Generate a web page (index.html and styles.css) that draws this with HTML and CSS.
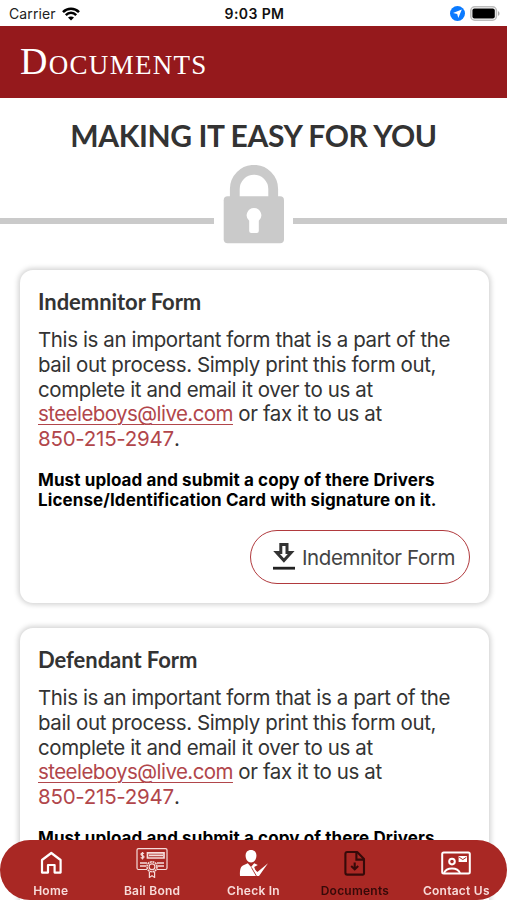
FILE: index.html
```
<!DOCTYPE html>
<html lang="en">
<head>
    <meta charset="UTF-8">
    <meta name="viewport" content="width=device-width, initial-scale=1.0">
    <title>Documents</title>
    <link rel="stylesheet" href="styles.css">
</head>
<body>
    <div class="status-bar">
        <div class="carrier">
            <span>Carrier</span>
            <svg width="18" height="14" viewBox="0 0 18 14" fill="none" stroke="#000" stroke-width="2.5">
                <path d="M1 5.2C5.4 0.7 12.6 0.7 17 5.2"/>
                <path d="M3.8 8.1C6.8 5.1 11.2 5.1 14.2 8.1"/>
                <path d="M9 13.6L6 10.6C7.6 9 10.4 9 12 10.6Z" fill="#000" stroke="none"/>
            </svg>
        </div>
        <div class="time">9:03 PM</div>
        <div class="indicators">
            <svg width="15" height="15" viewBox="0 0 15 15">
                <circle cx="7.5" cy="7.5" r="7.5" fill="#0a7aff"/>
                <path d="M11.8 3.4L8.3 12L7.2 8L3 7.1Z" fill="#fff"/>
            </svg>
            <svg width="30" height="15" viewBox="0 0 30 15">
                <rect x="0.8" y="0.8" width="25.6" height="13.4" rx="4" fill="#fff" stroke="#bdbdbd" stroke-width="1.6"/>
                <rect x="2.4" y="2.6" width="22.4" height="9.8" rx="2" fill="#000"/>
                <path d="M28 5.2C30 5.8 30 9.2 28 9.8Z" fill="#aaa"/>
            </svg>
        </div>
    </div>

    <header class="header">
        <h1>Documents</h1>
    </header>

    <main class="content">
        <h2 class="tagline">MAKING IT EASY FOR YOU</h2>
        <div class="divider">
            <span class="line"></span>
            <svg class="lock" width="61" height="79" viewBox="0 0 61 79">
                <path d="M11.8 36V24a19.2 19.2 0 0 1 38.4 0V36" fill="none" stroke="#cacaca" stroke-width="9.8"/>
                <rect x="0.7" y="31.2" width="60.3" height="47" rx="4" fill="#cacaca"/>
                <path d="M31 43a7.3 7.3 0 0 1 4.8 12.8V66q0 2-2 2h-5.6q-2 0-2-2V55.8a7.3 7.3 0 0 1 4.8-12.8Z" fill="#fff"/>
            </svg>
            <span class="line"></span>
        </div>

        <section class="card">
            <h3>Indemnitor Form</h3>
            <p class="description">
                This is an important form that is a part of the<br>
                bail out process. Simply print this form out,<br>
                complete it and email it over to us at<br>
                <a class="email" href="#">steeleboys@live.com</a> or fax it to us at<br>
                <a class="phone" href="#">850-215-2947</a>.
            </p>
            <p class="note">
                Must upload and submit a copy of there Drivers<br>
                License/Identification Card with signature on it.
            </p>
            <a class="download" href="#">
                <svg width="22" height="27" viewBox="0 0 22 27">
                    <path d="M7.8 1.5H14V9.5H18.2L10.9 17.6L3.6 9.5H7.8Z" fill="none" stroke="#333" stroke-width="3"/>
                    <rect x="0" y="23.8" width="22" height="2.8" fill="#222"/>
                </svg>
                <span>Indemnitor Form</span>
            </a>
        </section>

        <section class="card">
            <h3>Defendant Form</h3>
            <p class="description">
                This is an important form that is a part of the<br>
                bail out process. Simply print this form out,<br>
                complete it and email it over to us at<br>
                <a class="email" href="#">steeleboys@live.com</a> or fax it to us at<br>
                <a class="phone" href="#">850-215-2947</a>.
            </p>
            <p class="note">
                Must upload and submit a copy of there Drivers
            </p>
        </section>
    </main>

    <nav class="tabs">
        <a class="tab" href="#">
            <svg width="30" height="30" viewBox="0 0 30 30" fill="none" stroke="#fff" stroke-width="2.2">
                <path d="M6 12L15.3 5L24.6 12V24.6H18.6V17H12V24.6H6Z" stroke-linejoin="round"/>
            </svg>
            <span>Home</span>
        </a>
        <a class="tab" href="#">
            <svg width="32" height="30" viewBox="0 0 32 30" fill="none" stroke="#f6dcda" stroke-width="1.2">
                <path d="M11 21.5H2.5Q1 21.5 1 20V2Q1 .6 2.5 .6H29.5Q31 .6 31 2V20Q31 21.5 29.5 21.5H21"/>
                <path d="M8 5.6C7 4.6 4.8 5 5 6.4C5.2 8 8.2 7.2 8 9C7.8 10.4 5.6 10.6 4.8 9.4M6.5 4V11.4"/>
                <path d="M11.5 4.8H28V10H11.5ZM13 7.4H27M4 15H11M21 15H28M4 18H10M22 18H28" stroke-width="1.7"/>
                <circle cx="16" cy="18.8" r="5" stroke-dasharray="2 .6" stroke-width="1.6"/>
                <circle cx="16" cy="18.8" r="2.9" fill="#a92824"/>
                <path d="M13.4 23.4V29.4L16 27.8L18.6 29.4V23.4"/>
            </svg>
            <span>Bail Bond</span>
        </a>
        <a class="tab" href="#">
            <svg width="30" height="30" viewBox="0 0 30 30">
                <path d="M12 2C15.6 2 17.4 4.4 17.4 7.6C17.4 11.4 15.2 14.6 12 14.6S6.6 11.4 6.6 7.6C6.6 4.4 8.4 2 12 2Z" fill="#fff"/>
                <path d="M1 28C.6 21 1.8 18 5 17L8.8 15.2L12 19L15.2 15.2L18.8 17L15.2 19L18.6 28Z" fill="#fff"/>
                <path d="M14.8 20.8L18.4 24L29 15.2L20 28H17L13.6 21.8Z" fill="#fff"/>
                <path d="M12.4 19.4L17.4 28" stroke="#a92824" stroke-width=".9" fill="none"/>
            </svg>
            <span>Check In</span>
        </a>
        <a class="tab active" href="#">
            <svg width="30" height="30" viewBox="0 0 30 30" fill="none" stroke="#360a09" stroke-width="2.1">
                <path d="M7.2 4H17.2L24 11V25.6Q24 26.6 23 26.6H7.2Q5.4 26.6 5.4 24.8V5.8Q5.4 4 7.2 4Z" stroke-linejoin="round"/>
                <path d="M16.4 4V11.6H24M14.7 14.4V21M11.2 18L14.7 21.4L18.2 18"/>
            </svg>
            <span>Documents</span>
        </a>
        <a class="tab" href="#">
            <svg width="30" height="30" viewBox="0 0 30 30" fill="none" stroke="#fff" stroke-width="2">
                <rect x="1.2" y="4.4" width="27.6" height="21.2" rx="1.5"/>
                <circle cx="11" cy="13.6" r="2.8"/>
                <path d="M3 25C5.4 19 16.6 19 19 25"/>
                <path d="M17.6 8H26V14H17.6Z" fill="#fff" stroke="none"/>
                <path d="M18.2 9.2L21.8 11.6L25.4 9.2" stroke="#a92824" stroke-width="1"/>
            </svg>
            <span>Contact Us</span>
        </a>
    </nav>
</body>
</html>
```
FILE: styles.css
```
* {
    box-sizing: border-box;
}
body {
    display: flex;
    flex-direction: column;
    margin: 0;
    height: 900px;
    background-color: #fff;
    color: #333;
    font-family: Inter, sans-serif;
}
h1, h2, h3, p {
    margin: 0;
}
a {
    color: inherit;
    text-decoration: none;
}
svg {
    display: block;
    flex: none;
}

/* Status bar */
.status-bar {
    display: grid;
    grid-template-columns: 1fr auto 1fr;
    align-items: center;
    flex: none;
    height: 26px;
    padding: 1px 7px 0 9px;
    font-size: 14px;
    color: #222;
}
.carrier {
    display: flex;
    align-items: center;
    gap: 6px;
    letter-spacing: 0.1px;
}
.time {
    font-weight: 600;
    letter-spacing: 0.4px;
    color: #111;
}
.indicators {
    display: flex;
    justify-content: flex-end;
    align-items: center;
    gap: 5px;
}

/* Header */
.header {
    display: flex;
    align-items: center;
    flex: none;
    height: 72px;
    padding: 0 20px 2px;
    background-color: #95191c;
}
.header h1 {
    font-family: "Liberation Serif", serif;
    font-size: 38px;
    font-weight: normal;
    font-variant: small-caps;
    letter-spacing: 1.3px;
    color: #fff;
}

/* Lock banner */
.content {
    flex: 1;
    min-height: 0;
    overflow: hidden;
}
.tagline {
    padding-top: 19px;
    font-family: Lato, sans-serif;
    font-size: 30px;
    line-height: 36px;
    letter-spacing: -0.38px;
    text-align: center;
    white-space: nowrap;
}
.divider {
    display: flex;
    gap: 9px;
    height: 79px;
    margin-top: 12px;
}
.line {
    flex: 1;
    height: 6px;
    margin-top: 53px;
    background-color: #cacaca;
}

/* Cards */
.card {
    display: flex;
    flex-direction: column;
    height: 333px;
    margin: 26px 18px 0 20px;
    padding: 18px;
    border-radius: 13px;
    background-color: #fff;
    box-shadow: 0 0 5px 2px rgba(0,0,0,0.17);
    white-space: nowrap;
}
.card + .card {
    margin-top: 25px;
}
.card h3 {
    font-family: Lato, sans-serif;
    font-size: 22px;
    line-height: 28px;
    letter-spacing: -0.05px;
}
.description {
    margin-top: 12px;
    font-size: 20.5px;
    line-height: 24.75px;
    letter-spacing: -0.39px;
}
.email, .phone {
    color: #b1464b;
}
.email {
    letter-spacing: -0.56px;
    text-decoration: underline;
    text-decoration-thickness: 1px;
    text-underline-offset: 3px;
}
.phone {
    letter-spacing: -0.25px;
}
.note {
    margin-top: 18px;
    font-size: 17px;
    line-height: 20.5px;
    font-weight: 700;
    letter-spacing: 0.1px;
    color: #000;
}
.download {
    display: flex;
    align-items: center;
    align-self: flex-end;
    gap: 7px;
    width: 220px;
    height: 54px;
    margin: 19px 1px 0 0;
    padding-left: 22px;
    border: 1.5px solid #b13a3e;
    border-radius: 27px;
    font-size: 20.5px;
    letter-spacing: -0.4px;
    color: #444;
}
.download span {
    padding-top: 2px;
}

/* Bottom tabs */
.tabs {
    position: fixed;
    left: 0;
    right: 0;
    bottom: 0;
    display: flex;
    height: 60px;
    border-radius: 30px;
    background-color: #a92824;
}
.tab {
    flex: 1;
    display: flex;
    flex-direction: column;
    align-items: center;
    padding-top: 8px;
    font-size: 12px;
    line-height: 16px;
    font-weight: 600;
    letter-spacing: 0.25px;
    color: #f8dcda;
    gap: 5px;
}
.active {
    color: #360a09;
}
```
